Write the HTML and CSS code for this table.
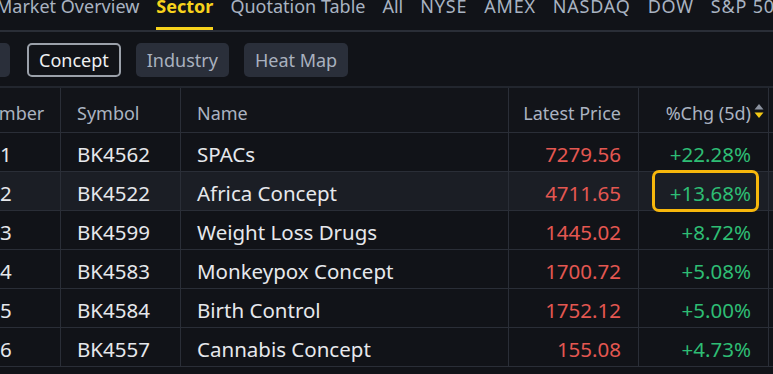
FILE: index.html
```html
<!DOCTYPE html>
<html>
<head>
<meta charset="utf-8">
<link rel="stylesheet" href="styles.css">
</head>
<body>
<div class="page">
  <nav class="tabs">
    <span class="tab">Market Overview</span>
    <span class="tab active">Sector</span>
    <span class="tab">Quotation Table</span>
    <span class="tab">All</span>
    <span class="tab caps">NYSE</span>
    <span class="tab caps">AMEX</span>
    <span class="tab caps">NASDAQ</span>
    <span class="tab caps">DOW</span>
    <span class="tab caps">S&amp;P 500</span>
  </nav>
  <div class="pills">
    <span class="pill partial">Region</span>
    <span class="pill selected">Concept</span>
    <span class="pill">Industry</span>
    <span class="pill">Heat Map</span>
  </div>
  <div class="table">
    <div class="row head">
      <div class="cell num">Number</div>
      <div class="cell">Symbol</div>
      <div class="cell">Name</div>
      <div class="cell right">Latest Price</div>
      <div class="cell right sort">%Chg (5d)<svg class="sort-icon" width="10" height="16" viewBox="0 0 10 16"><path d="M5 1 L9.5 6.5 L0.5 6.5 Z" fill="#8c93a0"/><path d="M5 15 L9.5 9.5 L0.5 9.5 Z" fill="#f5c915"/></svg></div>
      <div class="cell"></div>
    </div>
    <div class="row">
      <div class="cell num">1</div>
      <div class="cell">BK4562</div>
      <div class="cell">SPACs</div>
      <div class="cell right red">7279.56</div>
      <div class="cell right green">+22.28%</div>
      <div class="cell"></div>
    </div>
    <div class="row hover">
      <div class="cell num">2</div>
      <div class="cell">BK4522</div>
      <div class="cell">Africa Concept</div>
      <div class="cell right red">4711.65</div>
      <div class="cell right green marked">+13.68%</div>
      <div class="cell"></div>
    </div>
    <div class="row">
      <div class="cell num">3</div>
      <div class="cell">BK4599</div>
      <div class="cell">Weight Loss Drugs</div>
      <div class="cell right red">1445.02</div>
      <div class="cell right green">+8.72%</div>
      <div class="cell"></div>
    </div>
    <div class="row">
      <div class="cell num">4</div>
      <div class="cell">BK4583</div>
      <div class="cell">Monkeypox Concept</div>
      <div class="cell right red">1700.72</div>
      <div class="cell right green">+5.08%</div>
      <div class="cell"></div>
    </div>
    <div class="row">
      <div class="cell num">5</div>
      <div class="cell">BK4584</div>
      <div class="cell">Birth Control</div>
      <div class="cell right red">1752.12</div>
      <div class="cell right green">+5.00%</div>
      <div class="cell"></div>
    </div>
    <div class="row">
      <div class="cell num">6</div>
      <div class="cell">BK4557</div>
      <div class="cell">Cannabis Concept</div>
      <div class="cell right red">155.08</div>
      <div class="cell right green">+4.73%</div>
      <div class="cell"></div>
    </div>
  </div>
</div>
</body>
</html>
```
FILE: styles.css
```css
html, body {
  margin: 0;
  padding: 0;
  background: #111318;
  overflow: hidden;
  width: 773px;
  height: 374px;
}
.page {
  font-family: "Noto Sans", "Open Sans", sans-serif;
  color: #e6e8ec;
  width: 773px;
  height: 374px;
  overflow: hidden;
}
.tabs {
  display: flex;
  gap: 17px;
  margin-left: -4px;
  height: 30px;
  border-bottom: 2px solid #2a2e37;
  white-space: nowrap;
}
.tab {
  font-size: 18px;
  line-height: 18px;
  margin-top: -3px;
  color: #a9b3c2;
  height: 33px;
  box-sizing: border-box;
}
.tab.caps {
  letter-spacing: 0.8px;
}
.tab.active {
  color: #f7d21c;
  font-weight: 700;
  border-bottom: 3px solid #f7d21c;
}
.pills {
  display: flex;
  gap: 15px;
  padding-top: 11px;
  height: 56px;
  box-sizing: border-box;
  border-bottom: 2px solid #22262e;
}
.pill {
  height: 34px;
  box-sizing: border-box;
  padding: 0 11px;
  border-radius: 5px;
  background: #2a2f3a;
  color: #a9b1bf;
  font-size: 18px;
  line-height: 34px;
  white-space: nowrap;
}
.pill.partial {
  margin-left: -71px;
  width: 81px;
  color: transparent;
}
.pill.selected {
  background: #111318;
  border: 2px solid #9ba1aa;
  color: #eef0f2;
  line-height: 30px;
  padding: 0 10px;
  margin-left: 2px;
}
.table {
  margin-left: -39px;
}
.row {
  display: grid;
  grid-template-columns: 100px 120px 328px 130px 130px 100px;
  height: 38px;
  border-bottom: 1px solid #2a2e37;
}
.row.head {
  height: 44px;
  background: #121419;
}
.row.hover {
  background: #1b1e25;
}
.cell {
  border-right: 1px solid #2a2e37;
  display: flex;
  align-items: center;
  padding: 4px 16px 0;
  box-sizing: border-box;
  font-size: 20.5px;
  white-space: nowrap;
  position: relative;
}
.row.head .cell {
  color: #abb3c1;
  font-size: 18px;
  padding-top: 5px;
}
.cell.num {
  padding-left: 39px;
}
.row.head .cell.num {
  padding-left: 13px;
}
.cell.right {
  justify-content: flex-end;
  padding-right: 17px;
}
.cell.sort .sort-icon {
  position: absolute;
  right: 4px;
  top: 15px;
}
.red { color: #e45751; }
.green { color: #2ebd74; }
.marked::after {
  content: "";
  position: absolute;
  left: 13px;
  right: 9px;
  top: -2px;
  bottom: -2px;
  border: 3px solid #f7b70c;
  border-radius: 7px;
}
```
